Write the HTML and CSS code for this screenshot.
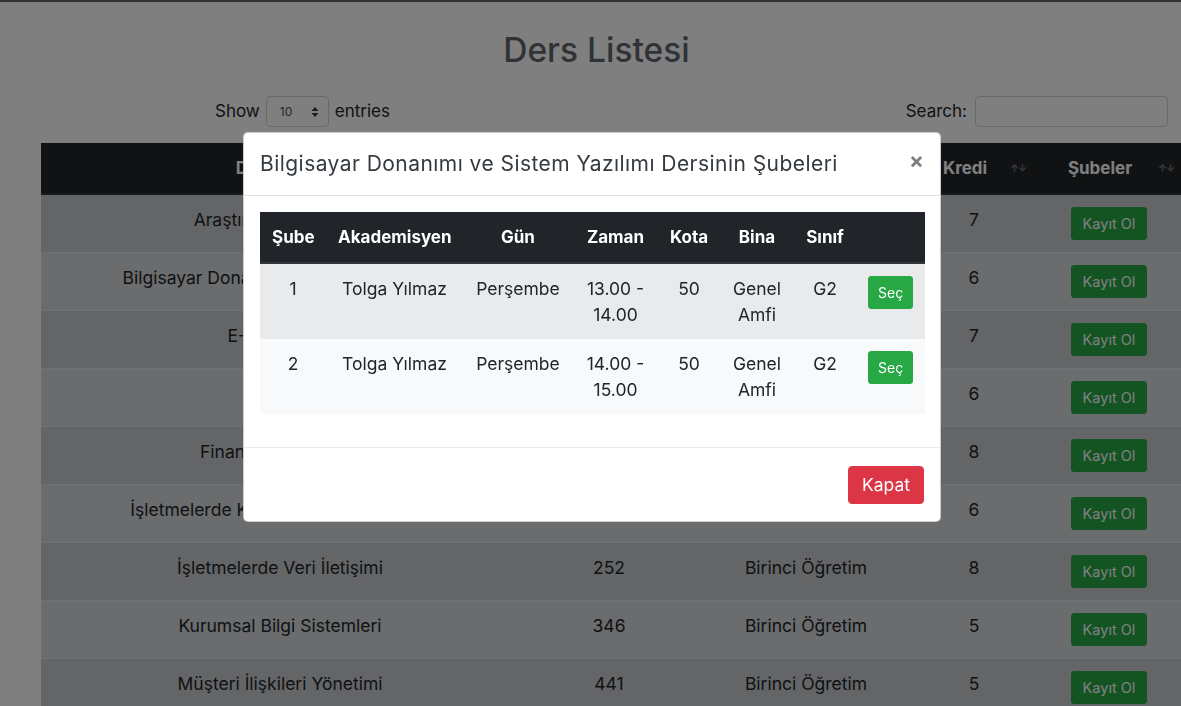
FILE: index.html
```html
<!DOCTYPE html>
<html lang="tr">
<head>
<meta charset="utf-8">
<title>Ders Listesi</title>
<link rel="stylesheet" href="styles.css">
</head>
<body>
<div class="topbar"></div>
<main class="page">
  <h1 class="title">Ders Listesi</h1>
  <div class="controls">
    <label class="length">Show
      <span class="select"><span>10</span>
        <svg width="8" height="12" viewBox="0 0 8 12"><path d="M4 1 L7.5 5 H0.5 Z M4 11 L0.5 7 H7.5 Z" fill="#343a40"/></svg>
      </span>
      entries</label>
    <label class="filter">Search: <span class="search-input"></span></label>
  </div>
  <table class="courses">
    <thead>
      <tr>
        <th class="c-name sort">Ders Adı</th>
        <th class="c-code sort">Ders Kodu</th>
        <th class="c-type sort">Öğretim</th>
        <th class="c-credit sort">Kredi</th>
        <th class="c-sec sort">Şubeler</th>
      </tr>
    </thead>
    <tbody>
      <tr><td>Araştırma Yöntemleri</td><td>118</td><td>Birinci Öğretim</td><td>7</td><td><span class="btn btn-sm btn-success">Kayıt Ol</span></td></tr>
      <tr><td>Bilgisayar Donanımı ve Sistem Yazılımı</td><td>143</td><td>Birinci Öğretim</td><td>6</td><td><span class="btn btn-sm btn-success">Kayıt Ol</span></td></tr>
      <tr><td>E-Pazarlama</td><td>215</td><td>Birinci Öğretim</td><td>7</td><td><span class="btn btn-sm btn-success">Kayıt Ol</span></td></tr>
      <tr><td>Etik</td><td>224</td><td>Birinci Öğretim</td><td>6</td><td><span class="btn btn-sm btn-success">Kayıt Ol</span></td></tr>
      <tr><td>Finansal Muhasebe</td><td>231</td><td>Birinci Öğretim</td><td>8</td><td><span class="btn btn-sm btn-success">Kayıt Ol</span></td></tr>
      <tr><td>İşletmelerde Karar Destek Sistemleri</td><td>247</td><td>Birinci Öğretim</td><td>6</td><td><span class="btn btn-sm btn-success">Kayıt Ol</span></td></tr>
      <tr><td>İşletmelerde Veri İletişimi</td><td>252</td><td>Birinci Öğretim</td><td>8</td><td><span class="btn btn-sm btn-success">Kayıt Ol</span></td></tr>
      <tr><td>Kurumsal Bilgi Sistemleri</td><td>346</td><td>Birinci Öğretim</td><td>5</td><td><span class="btn btn-sm btn-success">Kayıt Ol</span></td></tr>
      <tr><td>Müşteri İlişkileri Yönetimi</td><td>441</td><td>Birinci Öğretim</td><td>5</td><td><span class="btn btn-sm btn-success">Kayıt Ol</span></td></tr>
    </tbody>
  </table>
</main>

<div class="backdrop"></div>

<div class="modal" role="dialog">
  <div class="modal-header">
    <h5 class="modal-title">Bilgisayar Donanımı ve Sistem Yazılımı Dersinin Şubeleri</h5>
    <span class="close">×</span>
  </div>
  <div class="modal-body">
    <table class="sections">
      <thead>
        <tr>
          <th class="s-no">Şube</th>
          <th class="s-ak">Akademisyen</th>
          <th class="s-gun">Gün</th>
          <th class="s-zaman">Zaman</th>
          <th class="s-kota">Kota</th>
          <th class="s-bina">Bina</th>
          <th class="s-sinif">Sınıf</th>
          <th class="s-btn"></th>
        </tr>
      </thead>
      <tbody>
        <tr><td>1</td><td>Tolga Yılmaz</td><td>Perşembe</td><td>13.00 - 14.00</td><td>50</td><td>Genel Amfi</td><td>G2</td><td><span class="btn btn-sec">Seç</span></td></tr>
        <tr><td>2</td><td>Tolga Yılmaz</td><td>Perşembe</td><td>14.00 - 15.00</td><td>50</td><td>Genel Amfi</td><td>G2</td><td><span class="btn btn-sec">Seç</span></td></tr>
      </tbody>
    </table>
  </div>
  <div class="modal-footer">
    <span class="btn btn-danger">Kapat</span>
  </div>
</div>
</body>
</html>
```

FILE: styles.css
```css
html, body {
  margin: 0;
  height: 706px;
  overflow: hidden;
}
body {
  font-family: Inter, "DejaVu Sans", sans-serif;
  font-size: 17.5px;
  color: #212529;
  background: #fff;
}
.topbar {
  height: 2px;
  background: #5c6268;
}
.page {
  width: 1181px;
  overflow: hidden;
}
.title {
  margin: 0;
  padding: 28px 0 0 12px;
  text-align: center;
  font-size: 33.5px;
  line-height: 40px;
  font-weight: 500;
  color: #5f676f;
}
.controls {
  margin: 26px 13px 0 215px;
  height: 31px;
  display: flex;
  justify-content: space-between;
  align-items: center;
  font-size: 17px;
}
.length, .filter {
  display: flex;
  align-items: center;
  gap: 6px;
  line-height: 25px;
}
.filter { gap: 8px; }
.select {
  box-sizing: border-box;
  width: 63px;
  height: 31px;
  border: 1px solid #ced4da;
  border-radius: 4px;
  display: inline-flex;
  align-items: center;
  justify-content: space-between;
  padding: 0 9px 0 13px;
  font-size: 12px;
  color: #495057;
}
.search-input {
  box-sizing: border-box;
  width: 193px;
  height: 31px;
  border: 1px solid #ced4da;
  border-radius: 4px;
  background: #fff;
}
.courses {
  margin: 16px 0 0 41px;
  width: 1142px;
  table-layout: fixed;
  border-collapse: collapse;
}
.courses th, .courses td,
.sections th, .sections td {
  box-sizing: border-box;
}
.c-name { width: 478px; }
.c-code { width: 180px; }
.c-type { width: 214px; }
.c-credit { width: 122px; }
.c-sec { width: 148px; }
.courses th {
  position: relative;
  background: #212529;
  color: #fff;
  font-weight: 700;
  font-size: 17px;
  padding: 12px 30px 12px 12px;
  line-height: 26px;
  text-align: center;
  border-bottom: 2px solid #32383e;
}
.courses th.sort::after {
  content: "↑↓";
  position: absolute;
  right: 9px;
  top: 19px;
  font-size: 10px;
  line-height: 12px;
  letter-spacing: -1px;
  opacity: .35;
}
.courses td {
  padding: 12px;
  text-align: center;
  vertical-align: top;
  line-height: 25.5px;
  border-top: 1px solid #dee2e6;
  background: #d6d8db;
  white-space: nowrap;
}
.courses tbody tr:nth-child(odd) td {
  background: #c9cbce;
}
.btn {
  display: inline-block;
  box-sizing: border-box;
  border-radius: 4px;
  color: #fff;
  text-align: center;
  vertical-align: top;
  font-weight: 400;
}
.btn-sm {
  height: 33px;
  padding: 0 11px;
  font-size: 14.5px;
  line-height: 31px;
  border-radius: 3px;
}
.btn-success {
  background: #28a745;
  border: 1px solid #28a745;
}
.backdrop {
  position: fixed;
  inset: 0;
  background: rgba(0, 0, 0, .5);
  z-index: 10;
}
.modal {
  position: fixed;
  top: 132px;
  left: 243px;
  width: 698px;
  box-sizing: border-box;
  background: #fff;
  border: 1px solid rgba(0, 0, 0, .2);
  border-radius: 5px;
  z-index: 20;
}
.modal-header {
  display: flex;
  align-items: flex-start;
  padding: 16px;
  border-bottom: 1px solid #dee2e6;
}
.modal-title {
  margin: 0;
  font-size: 21px;
  line-height: 30px;
  font-weight: 400;
  letter-spacing: 0.45px;
  color: #343a40;
}
.close {
  margin: -16px -16px -16px auto;
  padding: 16px;
  font-size: 22px;
  line-height: 1;
  font-weight: 700;
  color: #000;
  opacity: .5;
  text-shadow: 0 1px 0 #fff;
}
.modal-body {
  padding: 16px;
}
.sections {
  width: 100%;
  table-layout: fixed;
  border-collapse: collapse;
  margin-bottom: 17px;
}
.s-no { width: 66px; }
.s-ak { width: 137px; }
.s-gun { width: 110px; }
.s-zaman { width: 85px; }
.s-kota { width: 62px; }
.s-bina { width: 74px; }
.s-sinif { width: 62px; }
.s-btn { width: 69px; }
.sections th {
  background: #212529;
  color: #fff;
  font-weight: 700;
  font-size: 17px;
  padding: 12px;
  line-height: 26px;
  text-align: center;
  border-bottom: 2px solid #32383e;
}
.sections td {
  padding: 12px;
  text-align: center;
  vertical-align: top;
  line-height: 25.5px;
  background: #f8f9fa;
}
.sections tbody tr:nth-child(odd) td {
  background: #e9eaec;
}
.btn-sec {
  height: 33px;
  padding: 0 9px;
  font-size: 14px;
  line-height: 31px;
  background: #28a745;
  border: 1px solid #28a745;
  border-radius: 3px;
}
.modal-footer {
  display: flex;
  justify-content: flex-end;
  padding: 18px 16px 17px;
  border-top: 1px solid #e9ecef;
}
.btn-danger {
  height: 38px;
  padding: 0 13px;
  font-size: 17.5px;
  line-height: 36px;
  background: #dc3545;
  border: 1px solid #dc3545;
}
```
